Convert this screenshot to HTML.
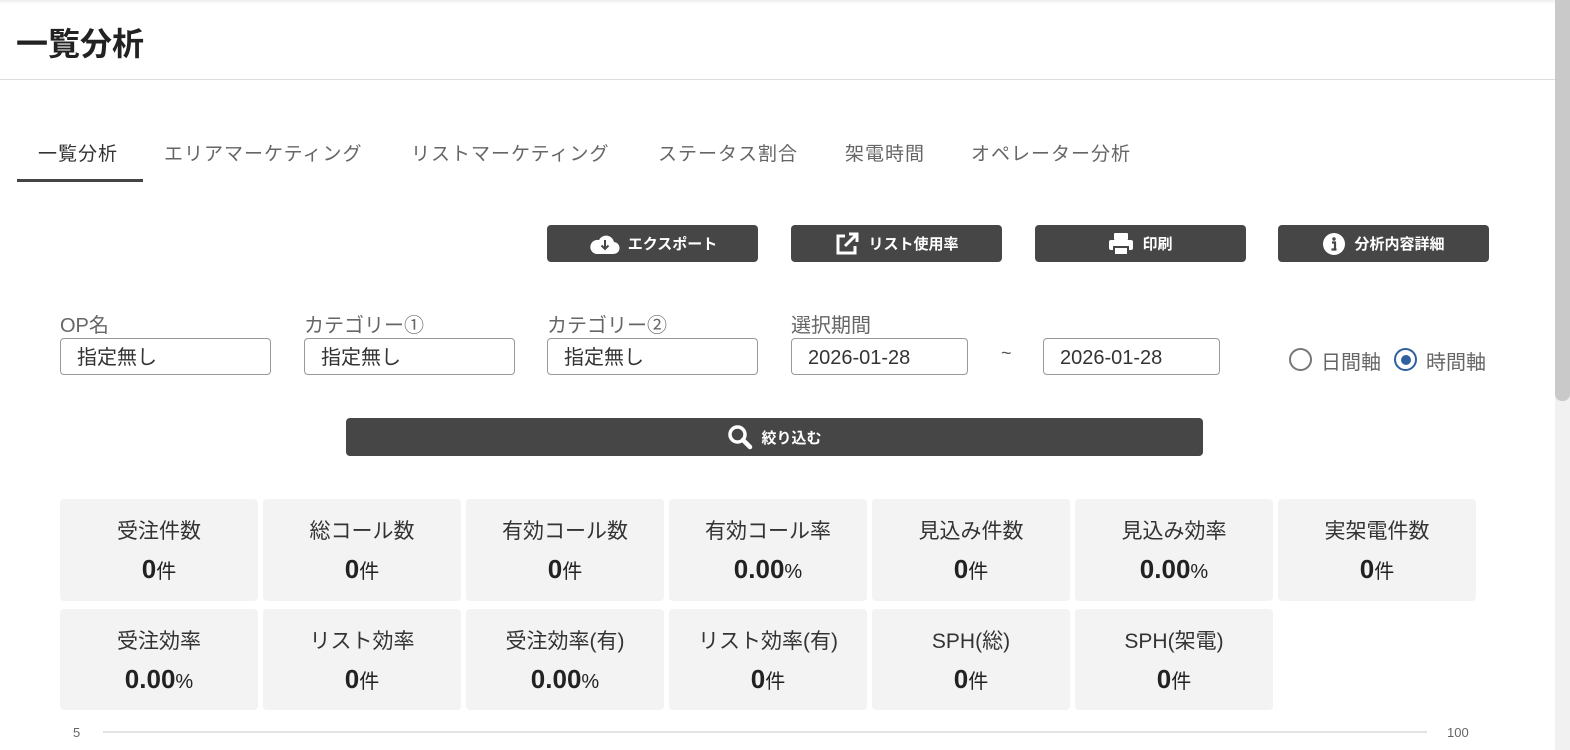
<!DOCTYPE html>
<html><head><meta charset="utf-8"><style>
*{margin:0;padding:0;box-sizing:border-box}
body{width:1570px;height:750px;overflow:hidden;background:#fff;font-family:"Liberation Sans","Noto Sans CJK JP",sans-serif;position:relative;color:#333}
.a{position:absolute;white-space:nowrap}
.tab{position:absolute;top:139px;font-size:19px;color:#666;letter-spacing:1px}
.btn{position:absolute;top:225px;width:211px;height:37px;background:#464646;border-radius:4px;color:#fff;font-size:15px;font-weight:bold;display:flex;align-items:center;justify-content:center;gap:8px}
.lbl{position:absolute;top:309px;font-size:20px;color:#666}
.inp{position:absolute;top:338px;height:37px;border:1px solid #999;border-radius:4px;font-size:20px;color:#333;padding-left:16px;line-height:38px}
.card{position:absolute;width:198px;background:#f3f3f3;border-radius:4px;text-align:center}
.card .t{font-size:21px;color:#333;margin-top:18px;line-height:30px}
.card .v{font-size:26px;font-weight:bold;color:#222;line-height:36px;margin-top:4px}
.card .v span{font-size:20px;font-weight:normal}
</style></head><body>
<div class="a" style="left:0;top:0;width:1555px;height:4px;background:linear-gradient(#eee,#fff)"></div>
<div class="a" style="left:16px;top:19px;font-size:32px;font-weight:bold;color:#222">一覧分析</div>
<div class="a" style="left:0;top:79px;width:1555px;height:1px;background:#ddd"></div>

<div class="tab" style="left:38px;color:#333">一覧分析</div>
<div class="tab" style="left:164px">エリアマーケティング</div>
<div class="tab" style="left:411px">リストマーケティング</div>
<div class="tab" style="left:658px">ステータス割合</div>
<div class="tab" style="left:845px">架電時間</div>
<div class="tab" style="left:971px">オペレーター分析</div>
<div class="a" style="left:17px;top:179px;width:126px;height:3px;background:#444"></div>

<div class="btn" style="left:547px"><svg width="32" height="24" viewBox="0 0 32 24"><path d="M8 22h17a6 6 0 0 0 1-12 8 8 0 0 0-15-2 7 7 0 0 0-3 14z" fill="#fff"/><path d="M17 8v9M13.5 13.5l3.5 3.5 3.5-3.5" stroke="#464646" stroke-width="2" fill="none"/></svg>エクスポート</div>
<div class="btn" style="left:791px"><svg width="26" height="26" viewBox="0 0 26 26" fill="none" stroke="#fff" stroke-width="3"><path d="M11 5H4v17h17v-7"/><path d="M15 3h8v8M23 3 11 15"/></svg>リスト使用率</div>
<div class="btn" style="left:1035px"><svg width="26" height="24" viewBox="0 0 26 24" fill="#fff"><rect x="6" y="1" width="14" height="7" rx="1"/><rect x="1" y="8" width="24" height="10" rx="2"/><rect x="6" y="15" width="14" height="8" fill="#fff" stroke="#464646" stroke-width="2"/></svg>印刷</div>
<div class="btn" style="left:1278px"><svg width="24" height="24" viewBox="0 0 24 24"><circle cx="12" cy="12" r="11" fill="#fff"/><circle cx="12" cy="7" r="1.7" fill="#464646"/><path d="M10 10.5h3v7h1.5M9.5 17.5h5" stroke="#464646" stroke-width="2.2" fill="none"/></svg>分析内容詳細</div>

<div class="lbl" style="left:60px">OP名</div>
<div class="lbl" style="left:304px">カテゴリー①</div>
<div class="lbl" style="left:547px">カテゴリー②</div>
<div class="lbl" style="left:791px">選択期間</div>
<div class="inp" style="left:60px;width:211px">指定無し</div>
<div class="inp" style="left:304px;width:211px">指定無し</div>
<div class="inp" style="left:547px;width:211px">指定無し</div>
<div class="inp" style="left:791px;width:177px">2026-01-28</div>
<div class="a" style="left:1001px;top:343px;font-size:18px;color:#555">~</div>
<div class="inp" style="left:1043px;width:177px">2026-01-28</div>
<div class="a" style="left:1289px;top:348px;width:23px;height:23px;border:2px solid #777;border-radius:50%"></div>
<div class="a" style="left:1321px;top:346px;font-size:20px;color:#666">日間軸</div>
<div class="a" style="left:1394px;top:348px;width:23px;height:23px;border:2px solid #2f5f9e;border-radius:50%"><div style="margin:4.5px;width:10px;height:10px;border-radius:50%;background:#2f5f9e"></div></div>
<div class="a" style="left:1426px;top:346px;font-size:20px;color:#666">時間軸</div>

<div class="btn" style="left:346px;top:418px;width:857px;height:38px"><svg width="26" height="26" viewBox="0 0 26 26" fill="none" stroke="#fff"><circle cx="10.5" cy="10.5" r="7.5" stroke-width="3.5"/><path d="M16 16l7 7" stroke-width="4.5" stroke-linecap="round"/></svg>絞り込む</div>

<div class="card" style="left:60px;top:499px;height:102px"><div class="t">受注件数</div><div class="v">0<span>件</span></div></div>
<div class="card" style="left:263px;top:499px;height:102px"><div class="t">総コール数</div><div class="v">0<span>件</span></div></div>
<div class="card" style="left:466px;top:499px;height:102px"><div class="t">有効コール数</div><div class="v">0<span>件</span></div></div>
<div class="card" style="left:669px;top:499px;height:102px"><div class="t">有効コール率</div><div class="v">0.00<span>%</span></div></div>
<div class="card" style="left:872px;top:499px;height:102px"><div class="t">見込み件数</div><div class="v">0<span>件</span></div></div>
<div class="card" style="left:1075px;top:499px;height:102px"><div class="t">見込み効率</div><div class="v">0.00<span>%</span></div></div>
<div class="card" style="left:1278px;top:499px;height:102px"><div class="t">実架電件数</div><div class="v">0<span>件</span></div></div>
<div class="card" style="left:60px;top:609px;height:101px"><div class="t">受注効率</div><div class="v">0.00<span>%</span></div></div>
<div class="card" style="left:263px;top:609px;height:101px"><div class="t">リスト効率</div><div class="v">0<span>件</span></div></div>
<div class="card" style="left:466px;top:609px;height:101px"><div class="t">受注効率(有)</div><div class="v">0.00<span>%</span></div></div>
<div class="card" style="left:669px;top:609px;height:101px"><div class="t">リスト効率(有)</div><div class="v">0<span>件</span></div></div>
<div class="card" style="left:872px;top:609px;height:101px"><div class="t">SPH(総)</div><div class="v">0<span>件</span></div></div>
<div class="card" style="left:1075px;top:609px;height:101px"><div class="t">SPH(架電)</div><div class="v">0<span>件</span></div></div>

<div class="a" style="left:73px;top:725px;font-size:13px;color:#666">5</div>
<div class="a" style="left:103px;top:731px;width:1324px;height:2px;background:#e3e3e3"></div>
<div class="a" style="left:1447px;top:725px;font-size:13px;color:#666">100</div>

<div class="a" style="left:1555px;top:0;width:15px;height:750px;background:#f1f1f1"></div>
<div class="a" style="left:1555px;top:0;width:15px;height:401px;background:#c9c9c9;border-radius:0 0 7px 7px"></div>
</body></html>
